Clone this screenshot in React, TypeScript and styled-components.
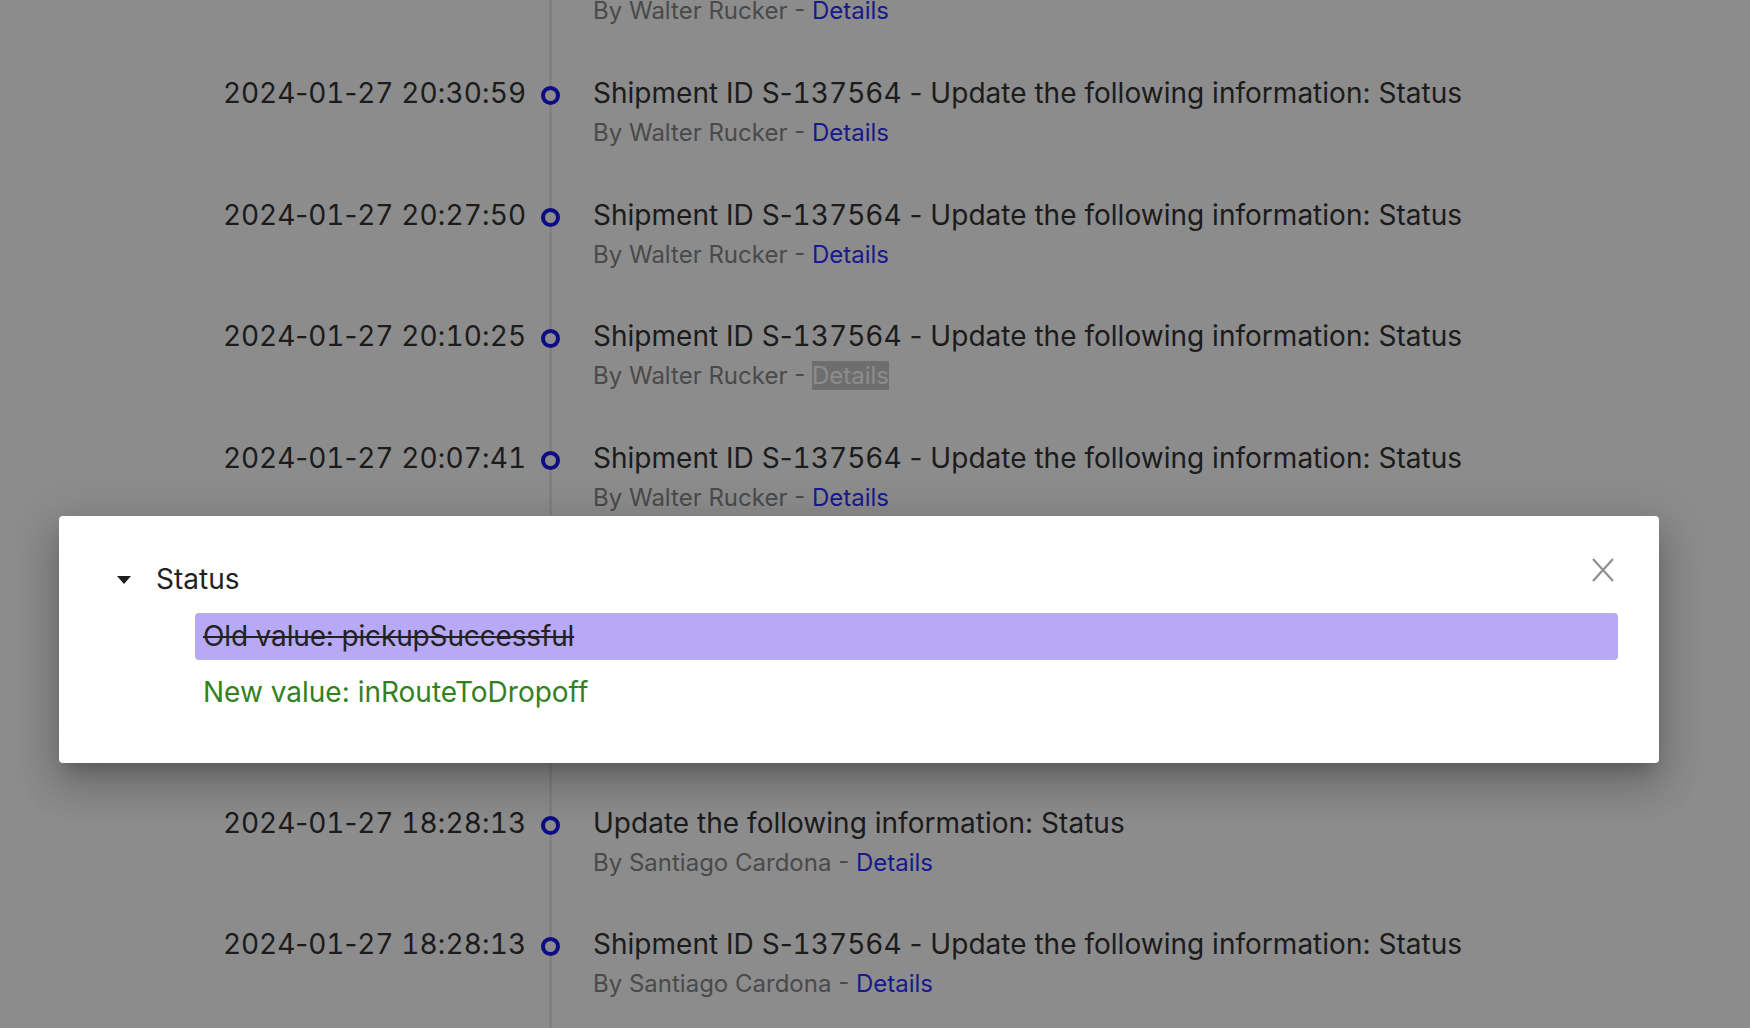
import React from "react";
import styled, { createGlobalStyle } from "styled-components";

const Global = createGlobalStyle`
  html, body { margin: 0; padding: 0; background: #ffffff; }
  body { font-family: Inter, "Noto Sans", "Liberation Sans", sans-serif; overflow: hidden; }
  * { box-sizing: border-box; }
`;

const Page = styled.div`
  width: 1750px;
  height: 1028px;
  overflow: hidden;
  position: relative;
`;

const Timeline = styled.div`
  margin-top: -46.6px;
  display: flex;
  flex-direction: column;
`;

const Row = styled.div`
  display: grid;
  grid-template-columns: 525px 50px 1fr;
  height: 121.6px;
`;

const DateCell = styled.div`
  text-align: right;
  font-size: 28px;
  line-height: 36px;
  color: #333333;
  letter-spacing: -0.05px;
  margin-right: -1px;
  white-space: nowrap;
`;

const Num = styled.span`
  font-variant-numeric: tabular-nums;
`;

const DotCell = styled.div`
  display: flex;
  justify-content: center;
  align-items: flex-start;
  background: linear-gradient(
    to right,
    transparent 24px,
    #ececec 24px,
    #ececec 27px,
    transparent 27px
  );
`;

const Dot = styled.span`
  margin-top: 11px;
  width: 19px;
  height: 19px;
  border-radius: 50%;
  border: 4px solid #1616ee;
  background: #ffffff;
`;

const Content = styled.div`
  padding-left: 18px;
  display: flex;
  flex-direction: column;
`;

const Title = styled.div`
  font-size: 28px;
  line-height: 36px;
  color: #333333;
  letter-spacing: 0.02px;
  white-space: nowrap;
`;

const Sub = styled.div`
  margin-top: 7px;
  font-size: 24px;
  line-height: 30px;
  color: #888888;
  white-space: nowrap;
`;

const Link = styled.a<{ $focused?: boolean }>`
  color: ${(p) => (p.$focused ? "#ffffff" : "#2f2fff")};
  background: ${(p) => (p.$focused ? "#c9c9c9" : "transparent")};
  text-decoration: none;
  cursor: pointer;
`;

const Backdrop = styled.div`
  position: absolute;
  inset: 0;
  background: rgba(0, 0, 0, 0.45);
`;

const Dialog = styled.div`
  position: absolute;
  left: 59px;
  top: 516px;
  width: 1600px;
  height: 247px;
  background: #ffffff;
  border-radius: 4px;
  padding: 43px 41px 0 58px;
  box-shadow: 0 11px 15px -7px rgba(0, 0, 0, 0.2),
    0 24px 38px 3px rgba(0, 0, 0, 0.14), 0 9px 46px 8px rgba(0, 0, 0, 0.12);
`;

const Header = styled.div`
  display: flex;
  align-items: center;
  height: 40px;
`;

const Caret = styled.span`
  width: 0;
  height: 0;
  border-left: 7px solid transparent;
  border-right: 7px solid transparent;
  border-top: 8px solid #1e1e1e;
  margin-right: 25px;
  margin-top: 1px;
`;

const FieldName = styled.span`
  font-size: 28px;
  line-height: 40px;
  color: #222222;
`;

const Close = styled.button`
  margin-left: auto;
  margin-top: -18px;
  width: 30px;
  height: 30px;
  border: none;
  background: transparent;
  padding: 0;
  display: flex;
  align-items: center;
  justify-content: center;
  cursor: pointer;
`;

const Values = styled.div`
  margin-left: 78px;
  margin-top: 14px;
  display: flex;
  flex-direction: column;
`;

const OldValue = styled.div`
  height: 47px;
  line-height: 47px;
  padding: 0 8px;
  background: #b8a9f7;
  border-radius: 4px;
  font-size: 28px;
  letter-spacing: -0.15px;
  color: #222222;
  text-decoration: line-through;
`;

const NewValue = styled.div`
  margin-top: 12px;
  line-height: 40px;
  padding: 0 8px;
  font-size: 28px;
  color: #33801f;
`;

function withNums(text: string) {
  return text.split(/(\d+)/).map((part, i) =>
    /^\d+$/.test(part) ? <Num key={i}>{part}</Num> : <React.Fragment key={i}>{part}</React.Fragment>
  );
}

type Item = {
  date: string;
  title: string;
  by: string;
  focused?: boolean;
};

const items: Item[] = [
  { date: "2024-01-27 20:31:12", title: "Shipment ID S-137564 - Update the following information: Status", by: "Walter Rucker" },
  { date: "2024-01-27 20:30:59", title: "Shipment ID S-137564 - Update the following information: Status", by: "Walter Rucker" },
  { date: "2024-01-27 20:27:50", title: "Shipment ID S-137564 - Update the following information: Status", by: "Walter Rucker" },
  { date: "2024-01-27 20:10:25", title: "Shipment ID S-137564 - Update the following information: Status", by: "Walter Rucker", focused: true },
  { date: "2024-01-27 20:07:41", title: "Shipment ID S-137564 - Update the following information: Status", by: "Walter Rucker" },
  { date: "2024-01-27 19:02:18", title: "Shipment ID S-137564 - Update the following information: Status", by: "Walter Rucker" },
  { date: "2024-01-27 18:41:05", title: "Shipment ID S-137564 - Update the following information: Status", by: "Santiago Cardona" },
  { date: "2024-01-27 18:28:13", title: "Update the following information: Status", by: "Santiago Cardona" },
  { date: "2024-01-27 18:28:13", title: "Shipment ID S-137564 - Update the following information: Status", by: "Santiago Cardona" },
];

export default function App() {
  return (
    <Page>
      <Global />
      <Timeline>
        {items.map((it, i) => (
          <Row key={i}>
            <DateCell>{withNums(it.date)}</DateCell>
            <DotCell>
              <Dot />
            </DotCell>
            <Content>
              <Title>{withNums(it.title)}</Title>
              <Sub>
                By {it.by} - <Link $focused={it.focused}>Details</Link>
              </Sub>
            </Content>
          </Row>
        ))}
      </Timeline>
      <Backdrop />
      <Dialog role="dialog">
        <Header>
          <Caret />
          <FieldName>Status</FieldName>
          <Close aria-label="close">
            <svg width="24" height="26" viewBox="0 0 24 26" fill="none">
              <path d="M2 2 L22 24 M22 2 L2 24" stroke="#8f8f8f" strokeWidth="2.2" />
            </svg>
          </Close>
        </Header>
        <Values>
          <OldValue>Old value: pickupSuccessful</OldValue>
          <NewValue>New value: inRouteToDropoff</NewValue>
        </Values>
      </Dialog>
    </Page>
  );
}
